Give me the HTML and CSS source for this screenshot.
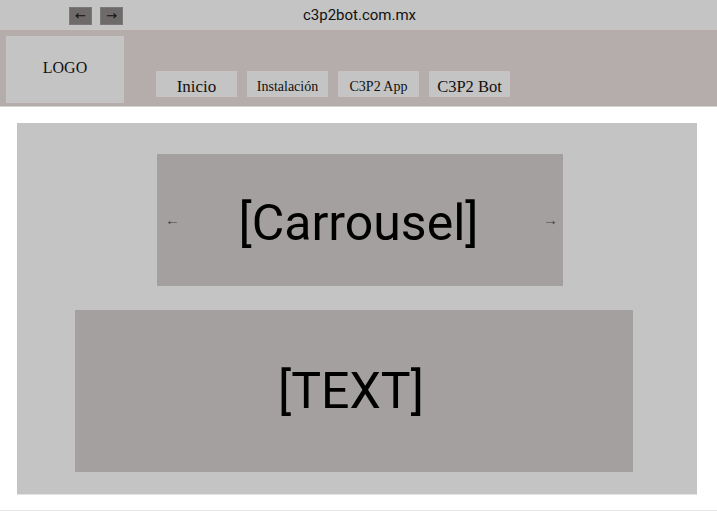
FILE: index.html
```html
<!DOCTYPE html>
<html lang="es">
<head>
<meta charset="utf-8">
<title>c3p2bot.com.mx</title>
<link rel="stylesheet" href="styles.css">
</head>
<body>
<div class="topbar">
  <div class="navbtns">
    <span class="nbtn">&larr;</span>
    <span class="nbtn">&rarr;</span>
  </div>
  <div class="url">c3p2bot.com.mx</div>
  <div></div>
</div>
<header class="header">
  <div class="logo">LOGO</div>
  <nav class="menu">
    <a class="item item-lg">Inicio</a>
    <a class="item item-sm">Instalación</a>
    <a class="item item-md">C3P2 App</a>
    <a class="item item-xl">C3P2 Bot</a>
  </nav>
</header>
<main class="panel">
  <section class="carousel">
    <span class="arrow">&larr;</span>
    <span class="big">[Carrousel]</span>
    <span class="arrow">&rarr;</span>
  </section>
  <section class="textbox">
    <span class="big">[TEXT]</span>
  </section>
</main>
<div class="footer"></div>
</body>
</html>
```
FILE: styles.css
```css
html, body {
  margin: 0;
  padding: 0;
  background: #ffffff;
}
body {
  width: 717px;
  height: 511px;
  overflow: hidden;
  font-family: Roboto, "Liberation Sans", sans-serif;
}
.topbar {
  height: 29px;
  background: #c4c4c4;
  border-bottom: 1px solid #cbc3c3;
  display: grid;
  grid-template-columns: 1fr auto 1fr;
  align-items: center;
}
.navbtns {
  display: flex;
  gap: 8px;
  padding-left: 69px;
  padding-top: 2px;
}
.nbtn {
  width: 21px;
  height: 16px;
  background: #6e6a6a;
  border: 1px solid #7d7878;
  color: #111;
  font-family: "DejaVu Sans", sans-serif;
  font-size: 13px;
  line-height: 16px;
  text-align: center;
}
.url {
  font-size: 15px;
  color: #111;
  padding-top: 1px;
  padding-left: 2px;
}
.header {
  height: 77px;
  background: #b5acac;
  border-bottom: 1px solid #d6d2d2;
  display: flex;
  align-items: flex-end;
  box-sizing: border-box;
  padding: 6px 0 5px 6px;
}
.logo {
  width: 116px;
  align-self: flex-start;
  background: #c4c4c4;
  border: 1px solid #c9c4c4;
  display: flex;
  align-items: center;
  justify-content: center;
  font-family: "Liberation Serif", serif;
  font-size: 16px;
  color: #111;
  padding-bottom: 3px;
  box-sizing: content-box;
  height: 62px;
}
.menu {
  display: flex;
  gap: 10px;
  margin-left: 32px;
  margin-bottom: 4px;
}
.item {
  width: 79px;
  background: #c4c4c4;
  border: 1px solid #c8c2c2;
  display: flex;
  align-items: center;
  justify-content: center;
  font-family: "Liberation Serif", serif;
  color: #111;
  padding-top: 5px;
  box-sizing: content-box;
  height: 19px;
}
.item-xl { font-size: 16.5px; }
.item-lg { font-size: 17px; }
.item-md { font-size: 14px; }
.item-sm { font-size: 14px; }
.panel {
  margin: 16px 0 0 17px;
  width: 680px;
  height: 372px;
  background: #c4c4c4;
  border-bottom: 1px solid #e3e3e3;
  display: flex;
  flex-direction: column;
  align-items: flex-start;
  box-sizing: border-box;
  padding-top: 31px;
}
.carousel {
  margin-left: 140px;
  width: 406px;
  height: 132px;
  background: #a4a09f;
  display: flex;
  align-items: center;
  justify-content: space-between;
  padding: 0 5px 0 8px;
  box-sizing: border-box;
}
.textbox {
  margin-left: 58px;
  margin-top: 24px;
  width: 558px;
  height: 162px;
  background: #a4a09f;
  display: flex;
  align-items: center;
  justify-content: center;
  padding-right: 6px;
  box-sizing: border-box;
}
.big {
  font-size: 50px;
  color: #000;
  line-height: 1;
}
.carousel .big { margin-right: 6px; padding-top: 6px; }
.textbox .big { padding-top: 0; }
.arrow {
  font-family: "Liberation Serif", serif;
  font-size: 15px;
  color: #444;
  padding-top: 0;
}
.footer {
  margin-top: 15px;
  border-top: 2px solid #e6e6e6;
}
```
